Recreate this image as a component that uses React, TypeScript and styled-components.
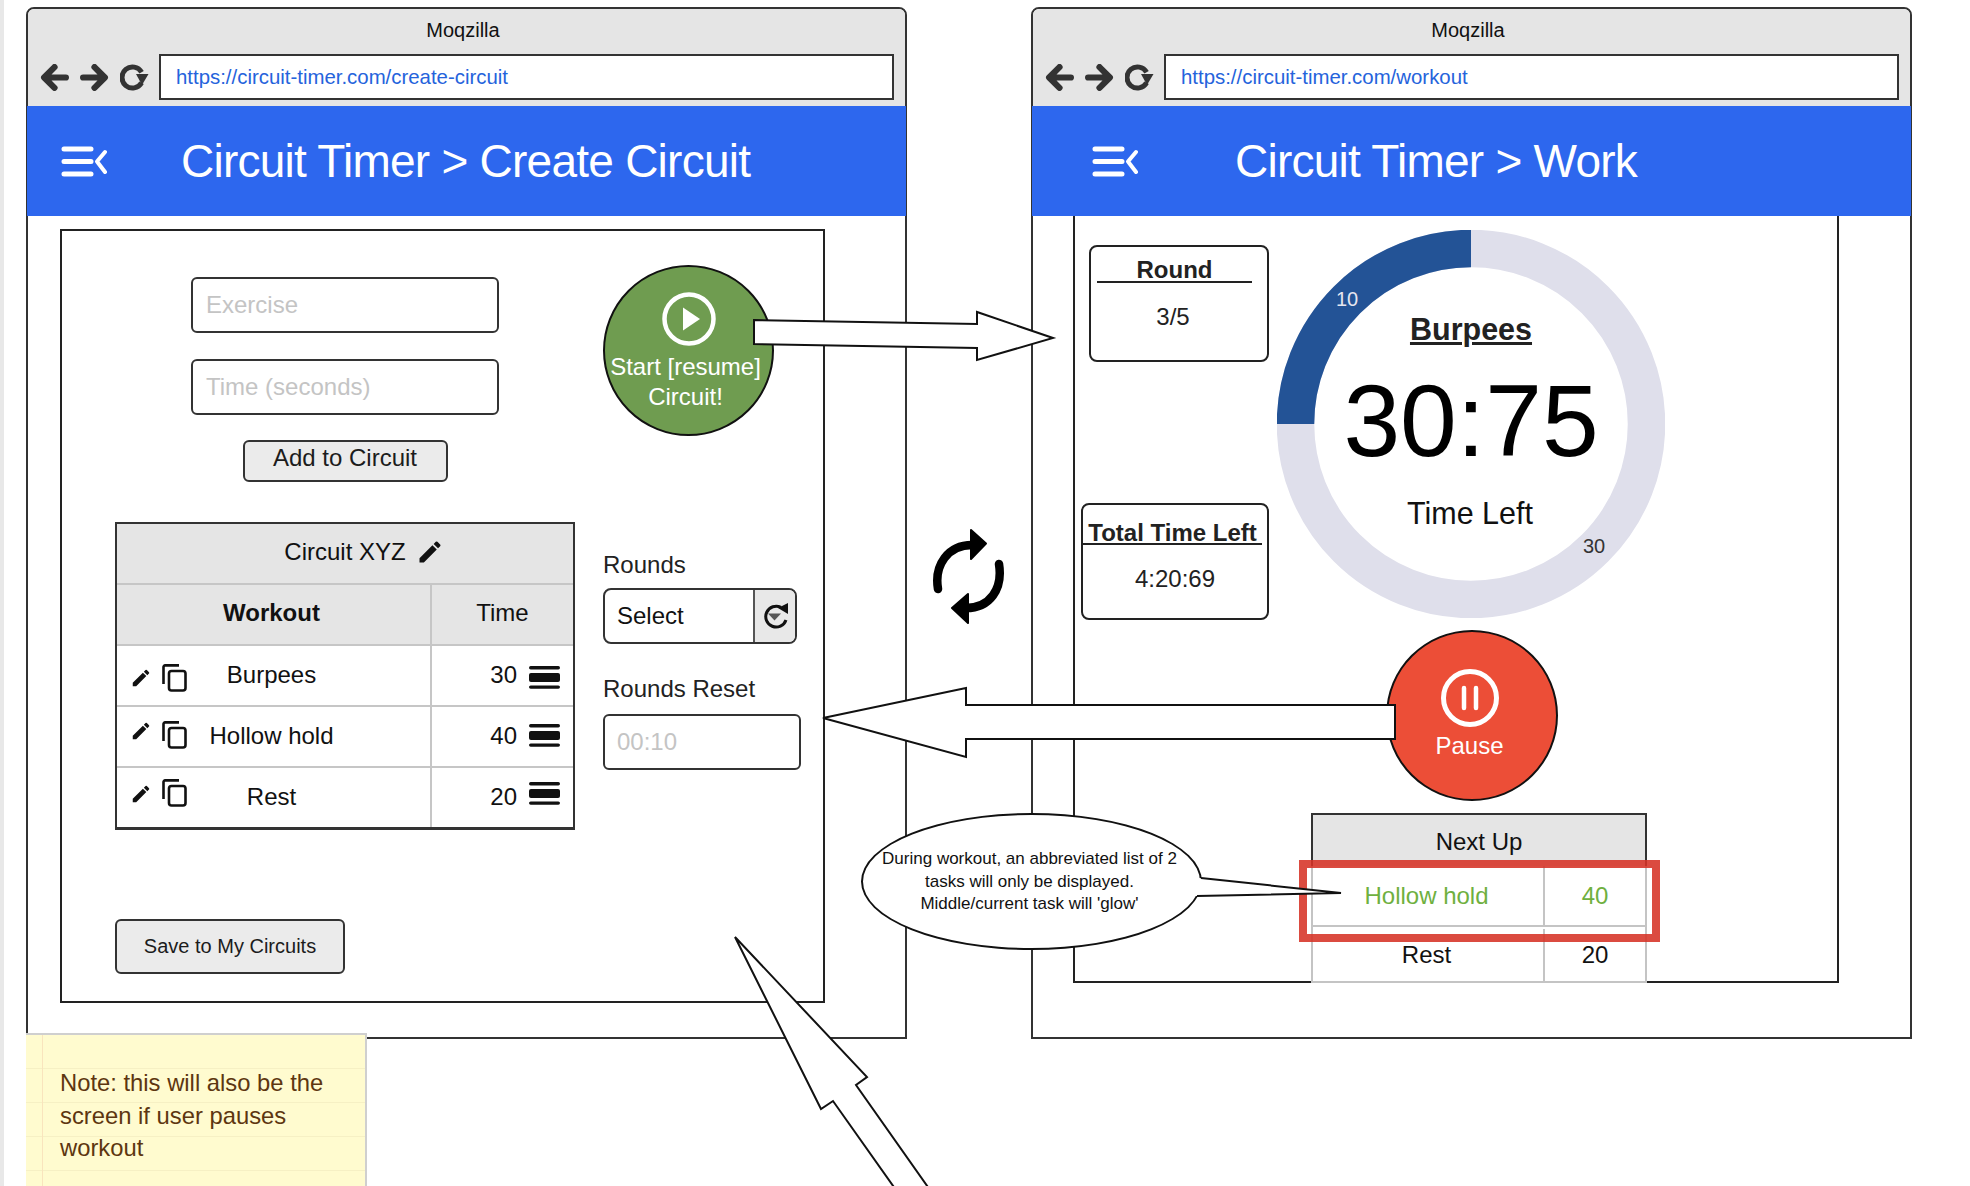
import * as React from "react";
import styled, { createGlobalStyle } from "styled-components";
import { MdEdit } from "react-icons/md";

const GlobalStyle = createGlobalStyle`
  html, body {
    margin: 0;
    padding: 0;
    background: #fff;
    overflow: hidden;
  }

  * {
    box-sizing: border-box;
  }
`;

const Canvas = styled.div`
  position: relative;
  width: 1970px;
  height: 1186px;
  overflow: hidden;
  background: #fff;
  color: #111;
  font-family: "Liberation Sans", Arial, sans-serif;
  font-size: 24px;

  &::before {
    content: "";
    position: absolute;
    left: 0;
    top: 0;
    bottom: 0;
    width: 4px;
    background: #e8e8e8;
  }
`;

const BrowserWindow = styled.section<{ $left: number; $width: number }>`
  position: absolute;
  left: ${p => p.$left}px;
  top: 7px;
  width: ${p => p.$width}px;
  height: 1032px;
  display: flex;
  flex-direction: column;
  border: 2px solid #333;
  border-radius: 8px 8px 0 0;
  background: #fff;
`;

const TitleBar = styled.div`
  height: 97px;
  flex: none;
  display: flex;
  flex-direction: column;
  background: #e5e5e5;
  border-radius: 6px 6px 0 0;
  padding: 9px 11px 6px 12px;
`;

const WindowName = styled.div`
  text-align: center;
  font-size: 20px;
  line-height: 24px;
  color: #111;
  margin-right: 8px;
`;

const NavRow = styled.div`
  margin-top: auto;
  display: flex;
  align-items: center;
`;

const NavIcons = styled.div`
  flex: none;
  width: 119px;
  display: flex;
  align-items: center;
  gap: 11px;
`;

const AddressField = styled.div`
  flex: 1;
  height: 46px;
  display: flex;
  align-items: center;
  padding-left: 15px;
  background: #fff;
  border: 2px solid #333;
  font-size: 20.4px;
  color: #2563dc;
`;

const AppHeader = styled.header<{ $inset: number; $gap: number }>`
  height: 110px;
  flex: none;
  display: flex;
  align-items: center;
  gap: ${p => p.$gap}px;
  margin: 0 -1px;
  padding-left: ${p => p.$inset}px;
  background: #2d67ee;
  color: #fff;
  font-size: 46px;
  letter-spacing: -0.75px;
`;

const CreateBody = styled.div`
  flex: 1;
  padding: 13px 0 0 32px;
`;

const CreateBox = styled.div`
  width: 765px;
  height: 774px;
  border: 2px solid #222;
  padding: 34px 0 0 53px;
`;

const TopRow = styled.div`
  display: flex;
  align-items: flex-start;
`;

const EntryForm = styled.div`
  width: 308px;
  margin: 12px 0 0 76px;
  display: flex;
  flex-direction: column;
  gap: 26px;
`;

const TextField = styled.div<{ $height?: number }>`
  height: ${p => p.$height ?? 56}px;
  display: flex;
  align-items: center;
  padding: 0 0 1px 13px;
  border: 2px solid #333;
  border-radius: 6px;
  background: #fff;
  font-size: 24px;
  color: #c4c4c4;
`;

const GreyButton = styled.div<{ $width: number; $height: number; $size: number }>`
  width: ${p => p.$width}px;
  height: ${p => p.$height}px;
  display: flex;
  align-items: center;
  justify-content: center;
  border: 2px solid #333;
  border-radius: 6px;
  background: #ebebeb;
  font-size: ${p => p.$size}px;
  color: #1c1c1c;
`;

const AddButton = styled(GreyButton)`
  align-self: center;
  margin-top: -1px;
  padding-bottom: 7px;
`;

const RoundAction = styled.div<{ $bg: string; $width: number }>`
  width: ${p => p.$width}px;
  height: 171px;
  flex: none;
  display: flex;
  flex-direction: column;
  align-items: center;
  border: 2px solid #111;
  border-radius: 50%;
  background: ${p => p.$bg};
  color: #fff;
  text-align: center;
`;

const StartAction = styled(RoundAction)`
  margin-left: 104px;
  padding-top: 25px;
  line-height: 30px;
`;

const ActionLabel = styled.div`
  margin-top: 6px;
  margin-right: 6px;
`;

const LowerRow = styled.div`
  display: flex;
  align-items: flex-start;
  margin-top: 40px;
`;

const CircuitTable = styled.div`
  width: 460px;
  height: 308px;
  flex: none;
  border: 2px solid #333;
  border-bottom-width: 3px;
  background: #fff;
`;

const CircuitTitle = styled.div`
  height: 59px;
  display: flex;
  align-items: center;
  justify-content: center;
  gap: 10px;
  background: #e5e5e5;
  padding: 0 0 3px 38px;
`;

const TableRow = styled.div<{ $head?: boolean }>`
  height: 61px;
  display: grid;
  grid-template-columns: 315px 1fr;
  border-top: 2px solid #c6c6c6;
  background: ${p => (p.$head ? "#e5e5e5" : "#fff")};
`;

const NameCell = styled.div<{ $strong?: boolean }>`
  display: grid;
  grid-template-columns: 1fr auto 1fr;
  align-items: center;
  justify-items: center;
  padding-right: 4px;
  border-right: 2px solid #c6c6c6;
  font-weight: ${p => (p.$strong ? 700 : 400)};
`;

const CellText = styled.span<{ $raise: number }>`
  padding-bottom: ${p => p.$raise}px;
`;

const RowTools = styled.div`
  justify-self: start;
  display: flex;
  align-items: center;
  gap: 10px;
  padding-left: 13px;
`;

const Nudged = styled.span<{ $lift: number }>`
  display: flex;
  margin-top: ${p => p.$lift * 2}px;
`;

const TimeCell = styled.div<{ $centered?: boolean }>`
  display: flex;
  align-items: center;
  justify-content: ${p => (p.$centered ? "center" : "flex-end")};
  gap: 12px;
  padding-right: ${p => (p.$centered ? 0 : 13)}px;
`;

const RoundsColumn = styled.div`
  margin-left: 28px;
  padding-top: 29px;
  width: 198px;
`;

const FieldLabel = styled.div`
  line-height: 28px;
  color: #222;
`;

const SelectField = styled.div`
  width: 194px;
  height: 56px;
  margin: 9px 0 31px;
  display: flex;
  border: 2px solid #333;
  border-radius: 8px;
  overflow: hidden;
  color: #111;
`;

const SelectValue = styled.div`
  flex: 1;
  display: flex;
  align-items: center;
  padding-left: 12px;
`;

const SelectCaret = styled.div`
  width: 42px;
  display: flex;
  align-items: center;
  justify-content: center;
  border-left: 2px solid #555;
  background: #e8e8e8;
`;

const ResetField = styled(TextField)`
  width: 198px;
  margin-top: 11px;
  padding-left: 12px;
`;

const SaveButton = styled(GreyButton)`
  margin-top: 89px;
`;

const WorkBody = styled.div`
  flex: 1;
  padding-left: 40px;
`;

const WorkBox = styled.div`
  width: 766px;
  height: 767px;
  border: 2px solid #222;
  border-top: 0;
  display: flex;
  flex-direction: column;
`;

const WorkTop = styled.div`
  display: flex;
  padding: 14px 0 0 6px;
`;

const StatColumn = styled.div`
  width: 188px;
  height: 390px;
  padding-top: 15px;
  display: flex;
  flex-direction: column;
  align-items: flex-end;
  justify-content: space-between;
`;

const StatCard = styled.div<{ $width: number }>`
  width: ${p => p.$width}px;
  height: 117px;
  border: 2px solid #222;
  border-radius: 8px;
  text-align: center;
  color: #222;
`;

const StatTitle = styled.div<{ $tight?: boolean }>`
  margin: ${p => (p.$tight ? 17 : 12)}px ${p => (p.$tight ? 5 : 15)}px 0 ${p => (p.$tight ? 0 : 6)}px;
  line-height: 22px;
  height: ${p => (p.$tight ? 23 : 24)}px;
  font-weight: 700;
  border-bottom: 2px solid #222;
`;

const StatValue = styled.div<{ $shift?: number }>`
  margin-top: 22px;
  padding-right: ${p => p.$shift ?? 0}px;
  line-height: 24px;
`;

const RingWrap = styled.div`
  position: relative;
  width: 388px;
  height: 388px;
  margin-left: 8px;
  flex: none;
`;

const RingFace = styled.div`
  position: absolute;
  inset: 0;
  display: flex;
  flex-direction: column;
  align-items: center;
  padding-top: 80px;
`;

const ExerciseName = styled.div`
  font-size: 30.5px;
  font-weight: 700;
  line-height: 38px;
  color: #222;
  text-decoration: underline;
`;

const Countdown = styled.div`
  font-size: 102px;
  line-height: 100px;
  margin-top: 23px;
  color: #000;
`;

const CountdownLabel = styled.div`
  font-size: 30.5px;
  line-height: 36px;
  margin-top: 24px;
  padding-right: 2px;
`;

const RingTick = styled.span<{ $x: number; $y: number; $color: string }>`
  position: absolute;
  left: ${p => p.$x}px;
  top: ${p => p.$y}px;
  transform: translate(-50%, -50%);
  font-size: 20px;
  color: ${p => p.$color};
`;

const PauseAction = styled(RoundAction)`
  align-self: flex-start;
  margin: 10px 0 0 311px;
  padding: 37px 5px 0 0;
  line-height: 30px;
`;

const PauseLabel = styled.div`
  margin-top: 4px;
`;

const NextUp = styled.div`
  position: relative;
  width: 336px;
  margin: 12px 0 0 236px;
  height: 170px;
  background: #fff;
`;

const NextHead = styled.div`
  height: 53px;
  display: flex;
  align-items: center;
  justify-content: center;
  padding-top: 3px;
  background: #e5e5e5;
  border: 2px solid #333;
  border-bottom: 0;
`;

const NextRow = styled.div<{ $active?: boolean }>`
  height: ${p => (p.$active ? 61 : 56)}px;
  display: grid;
  grid-template-columns: 232px 1fr;
  padding-top: ${p => (p.$active ? 0 : 2)}px;
  border: 2px solid #c4c4c4;
  border-top: 0;
  color: ${p => (p.$active ? "#6fb03f" : "#111")};
`;

const NextName = styled.div`
  display: flex;
  align-items: center;
  justify-content: center;
  padding-right: 3px;
  border-right: 2px solid #c4c4c4;
`;

const NextTime = styled.div`
  display: flex;
  align-items: center;
  justify-content: center;
`;

const GlowFrame = styled.div`
  position: absolute;
  left: -12px;
  right: -13px;
  top: 47px;
  height: 82px;
  border: 8px solid rgba(214, 50, 38, 0.88);
`;

const StickyNote = styled.aside`
  position: absolute;
  left: 26px;
  top: 1033px;
  width: 341px;
  height: 153px;
  padding: 32px 0 0 34px;
  border-top: 2px solid #cfcfcf;
  border-right: 2px solid #cfcfcf;
  background:
    linear-gradient(90deg, transparent 16px, #f9e4bd 16px, #f9e4bd 17px, transparent 17px),
    repeating-linear-gradient(180deg, #fffbcf 0, #fffbcf 33px, #f6f0c4 33px, #f6f0c4 34px);
  color: #5d3610;
  font-size: 23.8px;
  line-height: 32.5px;
`;

const Overlay = styled.svg`
  position: absolute;
  left: 0;
  top: 0;
  pointer-events: none;
`;

const Callout = styled.div`
  position: absolute;
  left: 861px;
  top: 813px;
  width: 341px;
  height: 137px;
  display: flex;
  align-items: center;
  justify-content: center;
  padding: 1px 4px 0 0;
  border: 2px solid #111;
  border-radius: 50%;
  background: #fff;
  font-size: 17px;
  line-height: 22.5px;
  text-align: center;
  color: #111;
`;

const SyncMark = styled.svg`
  position: absolute;
  left: 932px;
  top: 529px;
`;

const BackIcon = () => (
  <svg width="29" height="27" viewBox="0 0 28 26" fill="none" stroke="#333" strokeWidth="6" strokeLinecap="round" strokeLinejoin="round">
    <path d="M25 13H5M14 3 4 13l10 10" />
  </svg>
);

const ForwardIcon = () => (
  <svg width="29" height="27" viewBox="0 0 28 26" fill="none" stroke="#333" strokeWidth="6" strokeLinecap="round" strokeLinejoin="round">
    <path d="M3 13h20M14 3l10 10-10 10" />
  </svg>
);

const ReloadIcon = () => (
  <svg width="29" height="27" viewBox="0 0 29 27" fill="none">
    <path d="M21.6 8.25A10.5 10.5 0 1 0 21.6 18.75" stroke="#333" strokeWidth="5" />
    <path d="M16 10h12.5l-6.5 11z" fill="#333" />
  </svg>
);

const MenuIcon = () => (
  <svg width="46" height="31" viewBox="0 0 46 31" fill="none" stroke="#fff" strokeLinecap="round" strokeLinejoin="round">
    <path d="M3 3h27M3 15.5h27M3 28h27" strokeWidth="5" />
    <path d="M44 6 36 15.5 44 26" strokeWidth="4" />
  </svg>
);

const CopyIcon = () => (
  <svg width="25" height="28" viewBox="0 0 25 28" fill="none" stroke="#111" strokeWidth="2.6">
    <path d="M1.5 20V3a1.6 1.6 0 0 1 1.6-1.6H17" />
    <rect x="7" y="7" width="16.5" height="19.5" rx="2.5" />
  </svg>
);

const GripIcon = () => (
  <svg width="31" height="23" viewBox="0 0 31 23" fill="#111">
    <rect x="0" y="0" width="31" height="3.4" rx="1.7" />
    <rect x="0" y="7" width="31" height="9" rx="2" />
    <rect x="0" y="19.4" width="31" height="3.4" rx="1.7" />
  </svg>
);

const ResetIcon = () => (
  <svg width="27" height="26" viewBox="0 0 27 26" fill="none">
    <path d="M19 4.4A10.4 10.4 0 1 0 24 17" stroke="#111" strokeWidth="3" />
    <path d="M16 5 26 0v11z" fill="#111" />
    <path d="M6 10.5h13l-6.5 7z" fill="#555" />
  </svg>
);

const PlayIcon = () => (
  <svg width="54" height="54" viewBox="0 0 54 54" fill="none">
    <circle cx="27" cy="27" r="24.5" stroke="#fff" strokeWidth="4.5" />
    <path d="M21 15.5 38 27 21 38.5z" fill="#fff" />
  </svg>
);

const PauseIcon = () => (
  <svg width="58" height="58" viewBox="0 0 58 58" fill="none" stroke="#fff">
    <circle cx="29" cy="29" r="26.5" strokeWidth="5" />
    <path d="M23 19v20M35 19v20" strokeWidth="4.5" strokeLinecap="round" />
  </svg>
);

const TimerRing = () => (
  <svg width="388" height="388" viewBox="0 0 388 388" fill="none">
    <circle cx="194" cy="194" r="175.5" stroke="#dfdfeb" strokeWidth="37.5" />
    <path d="M194 18.5A175.5 175.5 0 0 0 18.5 194" stroke="#235396" strokeWidth="37.5" />
  </svg>
);

const Browser: React.FC<{
  left: number;
  width: number;
  url: string;
  crumb: string;
  inset: number;
  gap: number;
  children: React.ReactNode;
}> = ({ left, width, url, crumb, inset, gap, children }) => (
  <BrowserWindow $left={left} $width={width}>
    <TitleBar>
      <WindowName>Moqzilla</WindowName>
      <NavRow>
        <NavIcons>
          <BackIcon />
          <ForwardIcon />
          <ReloadIcon />
        </NavIcons>
        <AddressField>{url}</AddressField>
      </NavRow>
    </TitleBar>
    <AppHeader $inset={inset} $gap={gap}>
      <MenuIcon />
      <span>Circuit Timer &gt; {crumb}</span>
    </AppHeader>
    {children}
  </BrowserWindow>
);

const workouts = [
  { name: "Burpees", time: 30, pencil: 2, copy: 2, grip: 2 },
  { name: "Hollow hold", time: 40, pencil: -6, copy: -2, grip: -1 },
  { name: "Rest", time: 20, pencil: -4, copy: -5, grip: -4 },
];

const CreateCircuit = () => (
  <CreateBody>
    <CreateBox>
      <TopRow>
        <EntryForm>
          <TextField>Exercise</TextField>
          <TextField>Time (seconds)</TextField>
          <AddButton $width={205} $height={42} $size={24}>
            Add to Circuit
          </AddButton>
        </EntryForm>
        <StartAction $bg="#6f9c50" $width={171}>
          <PlayIcon />
          <ActionLabel>
            Start [resume]
            <br />
            Circuit!
          </ActionLabel>
        </StartAction>
      </TopRow>
      <LowerRow>
        <CircuitTable>
          <CircuitTitle>
            Circuit XYZ <MdEdit size={28} color="#111" />
          </CircuitTitle>
          <TableRow $head>
            <NameCell $strong>
              <span />
              <CellText $raise={4}>Workout</CellText>
            </NameCell>
            <TimeCell $centered>
              <CellText $raise={4}>Time</CellText>
            </TimeCell>
          </TableRow>
          {workouts.map(w => (
            <TableRow key={w.name}>
              <NameCell>
                <RowTools>
                  <Nudged $lift={w.pencil}>
                    <MdEdit size={22} color="#111" />
                  </Nudged>
                  <Nudged $lift={w.copy}>
                    <CopyIcon />
                  </Nudged>
                </RowTools>
                <CellText $raise={2}>{w.name}</CellText>
              </NameCell>
              <TimeCell>
                <CellText $raise={2}>{w.time}</CellText>
                <Nudged $lift={w.grip}>
                  <GripIcon />
                </Nudged>
              </TimeCell>
            </TableRow>
          ))}
        </CircuitTable>
        <RoundsColumn>
          <FieldLabel>Rounds</FieldLabel>
          <SelectField>
            <SelectValue>Select</SelectValue>
            <SelectCaret>
              <ResetIcon />
            </SelectCaret>
          </SelectField>
          <FieldLabel>Rounds Reset</FieldLabel>
          <ResetField>00:10</ResetField>
        </RoundsColumn>
      </LowerRow>
      <SaveButton $width={230} $height={55} $size={20}>
        Save to My Circuits
      </SaveButton>
    </CreateBox>
  </CreateBody>
);

const Workout = () => (
  <WorkBody>
    <WorkBox>
      <WorkTop>
        <StatColumn>
          <StatCard $width={180}>
            <StatTitle>Round</StatTitle>
            <StatValue $shift={12}>3/5</StatValue>
          </StatCard>
          <StatCard $width={188}>
            <StatTitle $tight>Total Time Left</StatTitle>
            <StatValue>4:20:69</StatValue>
          </StatCard>
        </StatColumn>
        <RingWrap>
          <TimerRing />
          <RingFace>
            <ExerciseName>Burpees</ExerciseName>
            <Countdown>30:75</Countdown>
            <CountdownLabel>Time Left</CountdownLabel>
          </RingFace>
          <RingTick $x={70} $y={69} $color="#e6e6f0">
            10
          </RingTick>
          <RingTick $x={317} $y={316} $color="#333">
            30
          </RingTick>
        </RingWrap>
      </WorkTop>
      <PauseAction $bg="#ec4e37" $width={172}>
        <PauseIcon />
        <PauseLabel>Pause</PauseLabel>
      </PauseAction>
      <NextUp>
        <NextHead>Next Up</NextHead>
        <NextRow $active>
          <NextName>Hollow hold</NextName>
          <NextTime>40</NextTime>
        </NextRow>
        <NextRow>
          <NextName>Rest</NextName>
          <NextTime>20</NextTime>
        </NextRow>
        <GlowFrame />
      </NextUp>
    </WorkBox>
  </WorkBody>
);

const arrowProps = { fill: "#fff", stroke: "#111", strokeWidth: 2, strokeLinejoin: "miter" as const };

export default function App() {
  return (
    <Canvas>
      <GlobalStyle />
      <Browser left={26} width={881} url="https://circuit-timer.com/create-circuit" crumb="Create Circuit" inset={34} gap={74}>
        <CreateCircuit />
      </Browser>
      <Browser left={1031} width={881} url="https://circuit-timer.com/workout" crumb="Work" inset={60} gap={97}>
        <Workout />
      </Browser>
      <StickyNote>
        Note: this will also be the
        <br />
        screen if user pauses
        <br />
        workout
      </StickyNote>
      <SyncMark width="74" height="95" viewBox="0 0 74 95" fill="none">
        <path d="M6 60C2 36 16 16 40 16" stroke="#000" strokeWidth="8.5" strokeLinecap="round" />
        <path d="M39 1 54 14.5 39 30z" fill="#000" stroke="#000" strokeWidth="2" strokeLinejoin="round" />
        <path d="M67 35C71 60 58 79 34 79" stroke="#000" strokeWidth="8.5" strokeLinecap="round" />
        <path d="M36 65 20 79 36 94z" fill="#000" stroke="#000" strokeWidth="2" strokeLinejoin="round" />
      </SyncMark>
      <Overlay width="1970" height="1186" viewBox="0 0 1970 1186">
        <polygon points="754,320 977,324 977,312 1053,338 977,360 977,348 754,344" {...arrowProps} />
        <polygon points="823,718 966,688 966,705 1395,705 1395,739 966,739 966,757" {...arrowProps} />
        <polygon points="735,937 821,1109 833,1101 896,1190 930,1190 856,1085 867,1077" {...arrowProps} />
      </Overlay>
      <Callout>
        During workout, an abbreviated list of 2
        <br />
        tasks will only be displayed.
        <br />
        Middle/current task will 'glow'
      </Callout>
      <Overlay width="1970" height="1186" viewBox="0 0 1970 1186">
        <polygon points="1199,878 1341,893 1195,896" fill="#fff" stroke="none" />
        <polyline points="1201,878 1341,893 1197,896" fill="none" stroke="#111" strokeWidth="2" />
      </Overlay>
    </Canvas>
  );
}
